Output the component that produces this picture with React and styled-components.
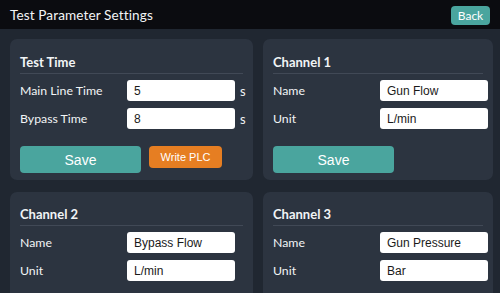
import React from "react";
import styled, { createGlobalStyle } from "styled-components";

const GlobalStyle = createGlobalStyle`
  html, body {
    margin: 0;
    padding: 0;
    background: #202731;
    font-family: "Lato", "Open Sans", sans-serif;
    color: #f2f4f6;
  }
  #root {
    min-height: 293px;
  }
`;

const Header = styled.header`
  height: 29px;
  background: #0b0c10;
  display: flex;
  align-items: center;
  justify-content: space-between;
  padding: 0 10px 0 10px;
  box-sizing: border-box;
`;

const Title = styled.h1`
  margin: 0;
  font-size: 13.6px;
  font-weight: 400;
  letter-spacing: 0.1px;
`;

const BackButton = styled.button`
  width: 39px;
  height: 19px;
  border: none;
  border-radius: 4px;
  background: #4aa59e;
  color: #fff;
  font-family: "Lato", sans-serif;
  font-size: 12px;
  padding: 0;
  margin-top: 1px;
`;

const Grid = styled.main`
  display: grid;
  grid-template-columns: 243px 230px;
  gap: 12px 10px;
  padding: 10px 7px 0 10px;
`;

const Card = styled.section`
  background: #2c3440;
  border-radius: 7px;
  padding: ${(p) => (p.$top ? "15px" : "14px")} 10px 7px 10px;
`;

const CardTitle = styled.h2`
  margin: 0;
  font-size: 13px;
  font-weight: 700;
  line-height: 16px;
  padding-bottom: 3px;
  border-bottom: 1px solid #414956;
  margin-bottom: 6px;
`;

const Rows = styled.div`
  display: flex;
  flex-direction: column;
  gap: 7px;
`;

const Row = styled.div`
  display: grid;
  grid-template-columns: 107px 108px auto;
  align-items: center;
`;

const Label = styled.span`
  font-size: 12.3px;
`;

const Input = styled.input`
  height: 21px;
  box-sizing: border-box;
  border: none;
  border-radius: 3px;
  background: #fff;
  color: #1a1a1a;
  font-family: "Liberation Sans", Arial, sans-serif;
  font-size: 12px;
  padding: 0 7px;
  outline: none;
`;

const Unit = styled.span`
  font-size: 13px;
  padding-left: 5px;
`;

const Actions = styled.div`
  display: flex;
  gap: 8px;
  align-items: flex-start;
  margin-top: 17px;
`;

const ActionButton = styled.button`
  border: none;
  border-radius: 4px;
  color: #fff;
  font-family: "Liberation Sans", Arial, sans-serif;
  padding: 0;
  background: ${(p) => (p.$variant === "plc" ? "#e67e22" : "#4aa59e")};
  width: ${(p) => (p.$variant === "plc" ? "73px" : "121px")};
  height: ${(p) => (p.$variant === "plc" ? "22px" : "27px")};
  font-size: ${(p) => (p.$variant === "plc" ? "11px" : "14px")};
`;

function Field({ label, value, unit }) {
  return (
    <Row>
      <Label>{label}</Label>
      <Input defaultValue={value} />
      {unit ? <Unit>{unit}</Unit> : <span />}
    </Row>
  );
}

const channels = [
  { title: "Channel 2", name: "Bypass Flow", unit: "L/min" },
  { title: "Channel 3", name: "Gun Pressure", unit: "Bar" },
];

export default function App() {
  return (
    <>
      <GlobalStyle />
      <Header>
        <Title>Test Parameter Settings</Title>
        <BackButton>Back</BackButton>
      </Header>
      <Grid>
        <Card $top>
          <CardTitle>Test Time</CardTitle>
          <Rows>
            <Field label="Main Line Time" value="5" unit="s" />
            <Field label="Bypass Time" value="8" unit="s" />
          </Rows>
          <Actions>
            <ActionButton>Save</ActionButton>
            <ActionButton $variant="plc">Write PLC</ActionButton>
          </Actions>
        </Card>
        <Card $top>
          <CardTitle>Channel 1</CardTitle>
          <Rows>
            <Field label="Name" value="Gun Flow" />
            <Field label="Unit" value="L/min" />
          </Rows>
          <Actions>
            <ActionButton>Save</ActionButton>
          </Actions>
        </Card>
        {channels.map((c) => (
          <Card key={c.title}>
            <CardTitle>{c.title}</CardTitle>
            <Rows>
              <Field label="Name" value={c.name} />
              <Field label="Unit" value={c.unit} />
            </Rows>
            <Actions>
              <ActionButton>Save</ActionButton>
            </Actions>
          </Card>
        ))}
      </Grid>
    </>
  );
}
